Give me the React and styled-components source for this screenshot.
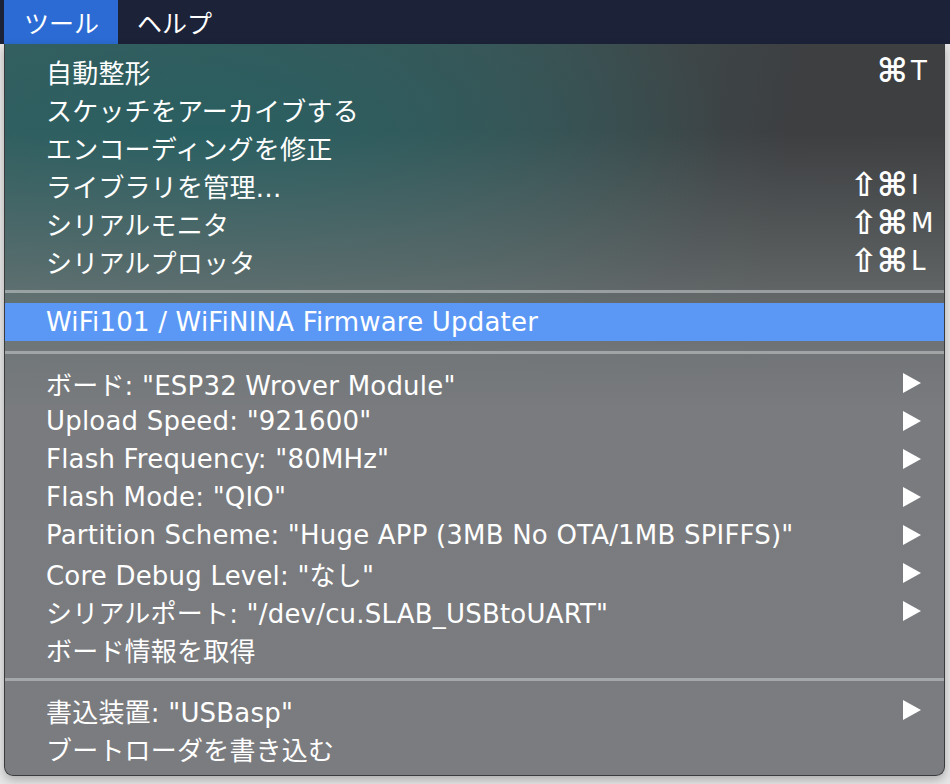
import React from "react";
import styled, { createGlobalStyle } from "styled-components";

const Global = createGlobalStyle`
  html, body { margin: 0; padding: 0; }
  body {
    width: 950px;
    height: 784px;
    overflow: hidden;
    background: #e6e6e6;
    font-family: "DejaVu Sans", "Noto Sans CJK JP", sans-serif;
  }
`;

const Page = styled.div`
  width: 950px;
  height: 784px;
  display: flex;
  flex-direction: column;
`;

const MenuBar = styled.div`
  height: 44px;
  background: #1c2238;
  display: flex;
  align-items: stretch;
  padding-left: 4px;
`;

const BarItem = styled.div`
  display: flex;
  align-items: center;
  padding: 0 19px 0 ${(p) => (p.$first ? "20px" : "19px")};
  color: #ffffff;
  font-size: 25px;
  background: ${(p) => (p.$active ? "#2b6bd3" : "transparent")};
`;

const Body = styled.div`
  display: flex;
  padding-left: 4px;
`;

const Menu = styled.div`
  width: 941px;
  box-sizing: border-box;
  border: 1px solid #3a3b3d;
  border-top: none;
  border-radius: 0 0 9px 9px;
  padding: 8px 0 8px;
  background:
    linear-gradient(180deg, rgba(120,122,125,0) 0%, rgba(120,122,125,0) 12%, rgba(112,118,118,0.55) 30%, rgba(118,121,123,0.92) 42%, #797b7e 50%, #7b7c7f 100%),
    radial-gradient(ellipse 55% 35% at 22% 14%, rgba(40,96,98,0.95) 0%, rgba(44,92,94,0.6) 50%, rgba(50,80,82,0) 100%),
    linear-gradient(100deg, #3a6363 0%, #3f5354 45%, #3d3f41 75%, #3e3f41 100%);
  box-shadow: 0 4px 10px rgba(0,0,0,0.25);
  color: #ffffff;
  font-size: 26px;
  letter-spacing: 0.2px;
`;

const Row = styled.div`
  height: 38px;
  display: flex;
  align-items: center;
  padding: 0 13px 0 41px;
  background: ${(p) => (p.$active ? "#5b98f5" : "transparent")};
  white-space: nowrap;
`;

const Label = styled.span`
  flex: 1;
`;

const Mods = styled.span`
  display: flex;
  align-items: center;
`;

const Mod = styled.span`
  width: 27px;
  text-align: center;
  font-size: 33px;
  line-height: 38px;
  font-weight: bold;
`;

const Key = styled.span`
  width: 20px;
  margin-left: 7px;
  text-align: left;
`;

const Arrow = styled.svg`
  width: 18px;
  height: 20px;
  margin-right: 10px;
  display: block;
`;

const Separator = styled.div`
  height: 3px;
  margin: 10px 0;
  background: rgba(200, 204, 206, 0.55);
`;

const Chevron = () => (
  <Arrow viewBox="0 0 18 20">
    <polygon points="0,0 18,10 0,20" fill="#ffffff" />
  </Arrow>
);

const groups = [
  [
    { label: "自動整形", mods: ["⌘"], key: "T" },
    { label: "スケッチをアーカイブする" },
    { label: "エンコーディングを修正" },
    { label: "ライブラリを管理…", mods: ["⇧", "⌘"], key: "I" },
    { label: "シリアルモニタ", mods: ["⇧", "⌘"], key: "M" },
    { label: "シリアルプロッタ", mods: ["⇧", "⌘"], key: "L" },
  ],
  [{ label: "WiFi101 / WiFiNINA Firmware Updater", active: true }],
  [
    { label: 'ボード: "ESP32 Wrover Module"', sub: true },
    { label: 'Upload Speed: "921600"', sub: true },
    { label: 'Flash Frequency: "80MHz"', sub: true },
    { label: 'Flash Mode: "QIO"', sub: true },
    { label: 'Partition Scheme: "Huge APP (3MB No OTA/1MB SPIFFS)"', sub: true },
    { label: 'Core Debug Level: "なし"', sub: true },
    { label: 'シリアルポート: "/dev/cu.SLAB_USBtoUART"', sub: true },
    { label: "ボード情報を取得" },
  ],
  [
    { label: '書込装置: "USBasp"', sub: true },
    { label: "ブートローダを書き込む" },
  ],
];

export default function App() {
  return (
    <Page>
      <Global />
      <MenuBar>
        <BarItem $active $first>ツール</BarItem>
        <BarItem>ヘルプ</BarItem>
      </MenuBar>
      <Body>
        <Menu>
          {groups.map((g, gi) => (
            <React.Fragment key={gi}>
              {gi > 0 && <Separator />}
              {g.map((it, i) => (
                <Row key={i} $active={it.active}>
                  <Label>{it.label}</Label>
                  {it.mods && (
                    <>
                      <Mods>
                        {it.mods.map((m, mi) => (
                          <Mod key={mi}>{m}</Mod>
                        ))}
                      </Mods>
                      <Key>{it.key}</Key>
                    </>
                  )}
                  {it.sub && <Chevron />}
                </Row>
              ))}
            </React.Fragment>
          ))}
        </Menu>
      </Body>
    </Page>
  );
}
